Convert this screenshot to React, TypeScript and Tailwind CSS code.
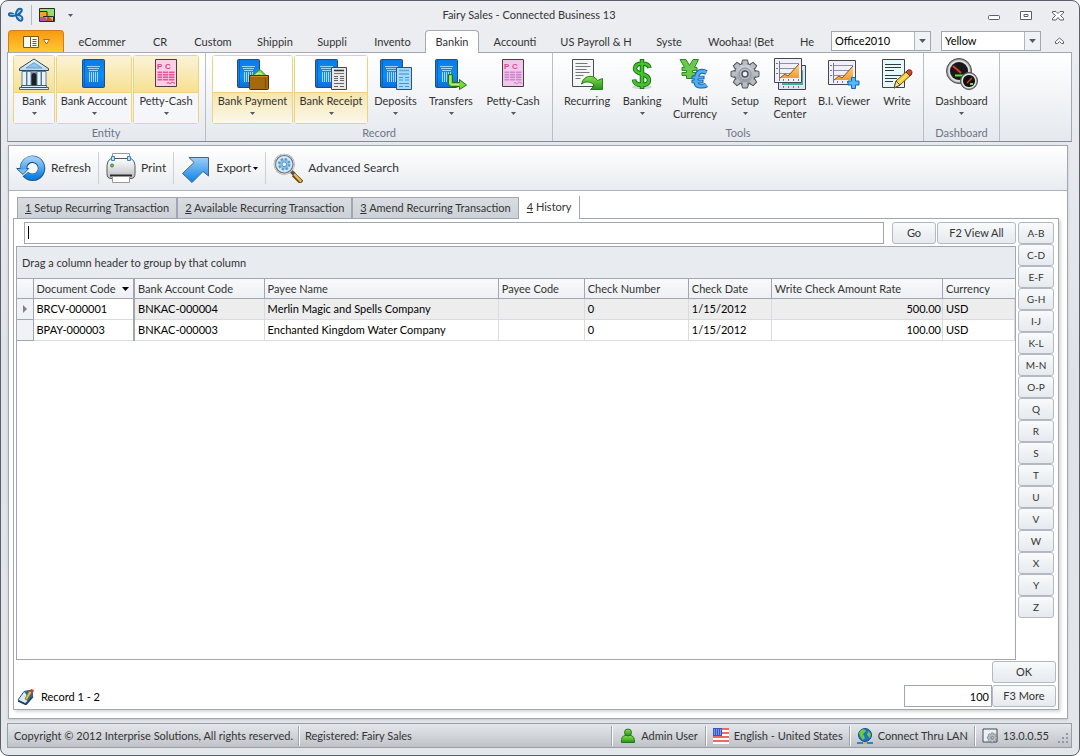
import React, { useState } from 'react';

type RibbonItem = {
  label: string;
  icon: React.ReactNode;
  width: string;
  arrow?: boolean;
  hot?: 'top' | 'bottom';
  wrap?: boolean;
};

type RibbonGroup = {
  title: string;
  pad: string;
  items: RibbonItem[];
};

const LETTERS = ['A-B', 'C-D', 'E-F', 'G-H', 'I-J', 'K-L', 'M-N', 'O-P', 'Q', 'R', 'S', 'T', 'U', 'V', 'W', 'X', 'Y', 'Z'];

const RIBBON_TABS = [
  { label: 'eCommer', width: 'w-[76px]' },
  { label: 'CR', width: 'w-10' },
  { label: 'Custom', width: 'w-[66px]' },
  { label: 'Shippin', width: 'w-[58px]' },
  { label: 'Suppli', width: 'w-14' },
  { label: 'Invento', width: 'w-[65px]' },
  { label: 'Bankin', width: 'w-[54px]' },
  { label: 'Accounti', width: 'w-[72px]' },
  { label: 'US Payroll & H', width: 'w-[90px]' },
  { label: 'Syste', width: 'w-14' },
  { label: 'Woohaa! (Bet', width: 'w-[88px]' },
  { label: 'He', width: 'w-11' }
];

const PAGE_TABS = ['Setup Recurring Transaction', 'Available Recurring Transaction', 'Amend Recurring Transaction', 'History'];

const COLUMNS = [
  { label: 'Bank Account Code', width: 'w-[130px]' },
  { label: 'Payee Name', width: 'w-[234px]' },
  { label: 'Payee Code', width: 'w-[86px]' },
  { label: 'Check Number', width: 'w-[104px]' },
  { label: 'Check Date', width: 'w-[83px]' },
  { label: 'Write Check Amount Rate', width: 'w-[171px]' },
  { label: 'Currency', width: 'w-[72px]' }
];

const ROWS = [
  ['BRCV-000001', 'BNKAC-000004', 'Merlin Magic and Spells Company', '', '0', '1/15/2012', '500.00', 'USD'],
  ['BPAY-000003', 'BNKAC-000003', 'Enchanted Kingdom Water Company', '', '0', '1/15/2012', '100.00', 'USD']
];

const Icon: React.FC<{ children: React.ReactNode; className?: string; box?: string }> = ({
  children,
  className = 'size-8',
  box = '0 0 32 32'
}) => (
  <svg viewBox={box} className={`shrink-0 ${className}`} fill="none" aria-hidden="true">
    {children}
  </svg>
);

const Defs = () => (
  <svg className="absolute size-0" aria-hidden="true">
    <defs>
      <linearGradient id="book" x1="0" y1="0" x2="0" y2="1">
        <stop offset="0" stopColor="#0a7be8" />
        <stop offset="0.6" stopColor="#0b8ef8" />
        <stop offset="1" stopColor="#0a6fd8" />
      </linearGradient>
      <linearGradient id="stone" x1="0" y1="0" x2="0" y2="1">
        <stop offset="0" stopColor="#f2faff" />
        <stop offset="1" stopColor="#b4d8f5" />
      </linearGradient>
      <linearGradient id="blue" x1="0" y1="0" x2="0" y2="1">
        <stop offset="0" stopColor="#9acdf8" />
        <stop offset="1" stopColor="#0b83e6" />
      </linearGradient>
      <linearGradient id="green" x1="0" y1="0" x2="0" y2="1">
        <stop offset="0" stopColor="#8be04e" />
        <stop offset="1" stopColor="#1f9414" />
      </linearGradient>
      <linearGradient id="steel" x1="0" y1="0" x2="0" y2="1">
        <stop offset="0" stopColor="#d6dade" />
        <stop offset="1" stopColor="#8f969e" />
      </linearGradient>
      <linearGradient id="printer" x1="0" y1="0" x2="0" y2="1">
        <stop offset="0" stopColor="#ffffff" />
        <stop offset="1" stopColor="#b9bdc1" />
      </linearGradient>
      <linearGradient id="area" x1="0" y1="0" x2="0" y2="1">
        <stop offset="0" stopColor="#fbd08a" />
        <stop offset="1" stopColor="#f09c30" />
      </linearGradient>
      <radialGradient id="rim">
        <stop offset="0.6" stopColor="#777" />
        <stop offset="0.8" stopColor="#eee" />
        <stop offset="1" stopColor="#666" />
      </radialGradient>
    </defs>
  </svg>
);

const Book = () => (
  <g>
    <path d="M5.500 1.500h20q1 0 1 1v26q0 1-1 1h-20q-1 0-1-1v-26q0-1 1-1z" fill="url(#book)" stroke="#34495e" />
    <path d="M6.500 2v27" stroke="#0a62bd" />
    <path d="M9 8.500h13M10 10.500h11M11 12.500h9" stroke="#9fd2ff" />
    <path d="M11.500 14v10M13.500 14v10M15.500 14v10M17.500 14v10M19.500 14v10" stroke="#a9d7ff" />
  </g>
);

const BankIcon = () => (
  <Icon>
    <path d="M4 12h24v16H4z" fill="#7f9bb2" />
    <path d="M16 1 30.500 10.500v2h-29v-2z" fill="url(#stone)" stroke="#30475c" />
    <path d="M16 4.500 8 10h16z" fill="#8cc5f0" stroke="#5b86aa" strokeWidth=".7" />
    <path d="M4 13.500h4.500v14H4zM9 13.500h4v14H9zM19 13.500h4v14h-4zM23.500 13.500H28v14h-4.500z" fill="#e4f3fe" stroke="#4a6882" strokeWidth=".8" />
    <path d="M13.500 28V17.500q0-2.500 2.500-2.500t2.500 2.500V28z" fill="#1d2024" />
    <path d="M3.500 27.500h25v2h-25zM1.500 29.500h29v2h-29z" fill="#d9effe" stroke="#30475c" strokeWidth=".8" />
  </Icon>
);

const BookIcon = () => (
  <Icon>
    <Book />
  </Icon>
);

const PettyIcon: React.FC<{ ink: string; paper: string; letters: string }> = ({ ink, paper, letters }) => (
  <Icon>
    <path d="M5.500 1.500h21v27h-21z" fill={paper} stroke="#4a3b48" />
    <path d="M7.500 13.500h17v9h-17z" fill={ink} />
    <path d="M7 15.500h18M7 18h18M7 20.500h18M12.500 13v10M18.500 13v10" stroke={paper} strokeWidth=".8" />
    <path d="M17 25.500c2-3 2 2 4-.500s2 .500 4 0" stroke={ink} strokeWidth="1.200" />
    <text x="7" y="11" fontSize="8" fontWeight="bold" fill={letters} fontFamily="Liberation Sans, sans-serif">P</text>
    <text x="15" y="11" fontSize="8" fontWeight="bold" fill={letters} fontFamily="Liberation Sans, sans-serif">C</text>
  </Icon>
);

const PaymentIcon = () => (
  <Icon>
    <g transform="translate(-4)"><Book /></g>
    <path d="M14.500 18 19 14.500l4-3 6.500 6.500z" fill="#7fd84d" stroke="#3a8a26" />
    <path d="M19 16.500q3-3 6 0" stroke="#dff7c9" />
    <path d="M12.500 17.500h19v13q0 1-1 1h-17q-1 0-1-1z" fill="#a4690c" stroke="#4f320a" />
    <path d="M13.500 18.500h17" stroke="#c98c29" />
    <path d="M28.500 20v10" stroke="#7b4c06" />
  </Icon>
);

const ReceiptIcon = () => (
  <Icon>
    <g transform="translate(-4)"><Book /></g>
    <path d="M16.500 9.500h15v22h-15z" fill="#e8e8e8" stroke="#484848" />
    <path d="M19 12.500h10" stroke="#333" strokeWidth="1.500" />
    <path d="M19 15.500h10" stroke="#777" />
    <path d="M19 18.500h4M25 18.500h4M19 20.500h4M25 20.500h4M19 22.500h4M25 22.500h4M19 25.500h10M19 28.500h4M25 28.500h4" stroke="#666" />
  </Icon>
);

const DepositsIcon = () => (
  <Icon>
    <g transform="translate(-4)"><Book /></g>
    <path d="M16.500 9.500h15v22h-15z" fill="#a6dafa" stroke="#34516a" />
    <path d="M19 12.500h10M19 16h10" stroke="#5aa9dc" strokeWidth="1.500" />
    <path d="M19 19.500h4M25 19.500h4M19 22h4M25 22h4M19 25.500h10M19 28.500h4M25 28.500h4" stroke="#4597cb" />
  </Icon>
);

const TransfersIcon = () => (
  <Icon>
    <g transform="translate(-4)"><Book /></g>
    <path d="M13.500 16.500h4v8h7v-3l7 5.500-7 4.500v-3h-8q-3 0-3-3z" fill="#7ed832" stroke="#2d6e1d" />
    <path d="M15 18v7q0 1.500 2 1.500h7" stroke="#c3f58d" />
  </Icon>
);

const RecurringIcon = () => (
  <Icon>
    <path d="M1.500 1.500h21v27h-21z" fill="#f5f6f7" stroke="#4a4d50" />
    <path d="M4.500 5.500h12M4.500 8.500h15M4.500 11.500h11M4.500 14.500h14M4.500 17.500h8M4.500 20.500h5" stroke="#777" />
    <path d="M10.500 26c2-9 12-10 16-3.500l5-2v11h-12l4-4c-4-4.500-9-4.500-13-1.500z" fill="url(#green)" stroke="#2c7a22" />
  </Icon>
);

const DollarIcon = () => (
  <Icon>
    <ellipse cx="16" cy="29" rx="10" ry="2" fill="#cfd3d6" />
    <path d="M23.500 10Q22.500 5.500 16 5.500T9 10.500q0 3.500 7 5.500t7 6q0 5-7 5-7.500 0-8-5.500M16 1v30" stroke="#176b12" strokeWidth="4.500" />
    <path d="M23.500 9.500Q22.500 5.500 16 5.500T9 10.500q0 3.500 7 5.500t7 6q0 5-7 5-7.500 0-8-5M16 1.800v28.400" stroke="#42c22c" strokeWidth="2.700" />
  </Icon>
);

const CurrencyIcon = () => (
  <Icon>
    <path d="M1 1.500h6l3.500 6 3.500-6h5.500l-4 8h2.500v3h-4.500v2H18v3h-4.500v3h-6v-3H3v-3h4.500v-2H3v-3h2.500z" fill="#6cc84a" stroke="#2a8a2b" />
    <path d="M27.500 14.500q-8-4-10 4.500t3 9 7-1" stroke="#155f9f" strokeWidth="5" />
    <path d="M12.500 19.500h13M12.500 23.500h12" stroke="#155f9f" strokeWidth="3.500" />
    <path d="M27.500 14.500q-8-4-10 4.500t3 9 7-1" stroke="#52aef2" strokeWidth="3" />
    <path d="M13.500 19.500h11M13.500 23.500h10" stroke="#52aef2" strokeWidth="1.800" />
  </Icon>
);

const gearTeeth = [0, 45, 90, 135, 180, 225, 270, 315];

const Gear: React.FC<{ fill: string; stroke: string }> = ({ fill, stroke }) => (
  <g>
    {gearTeeth.map((deg) => (
      <path key={deg} d="m12.500 6 1-4h5l1 4z" fill="#b3b9bf" stroke={stroke} transform={`rotate(${deg} 16 16)`} />
    ))}
    <circle cx="16" cy="16" r="10.500" fill={fill} stroke={stroke} />
    {gearTeeth.map((deg) => (
      <path key={deg} d="m13.500 7.500.5-4h4l.5 4z" fill="#b9bec4" transform={`rotate(${deg} 16 16)`} />
    ))}
    <circle cx="16" cy="16" r="6" fill="#b7bcc2" stroke="#8a9097" />
    <circle cx="16" cy="16" r="3" fill="#eef0f2" stroke={stroke} strokeWidth="1.500" />
  </g>
);

const SetupIcon = () => (
  <Icon>
    <Gear fill="url(#steel)" stroke="#50565d" />
  </Icon>
);

const Chart = () => (
  <g>
    <path d="M.5.500h27v24H.5z" fill="#f1effa" stroke="#46464e" />
    <path d="M5 5.500h20M5 10.500h20M5 15.500h20" stroke="#8e8ea6" />
    <path d="M2 5.500h2M2 10.500h2M2 15.500h2M5.500 3v20M9.500 21v2M14.500 21v2M19.500 21v2M24.500 21v2" stroke="#75758c" />
    <path d="m6 20 5-4 3 2 11-12v14z" fill="url(#area)" />
    <path d="m6 20 5-4 3 2 11-12" stroke="#875315" />
  </g>
);

const ReportIcon = () => (
  <Icon>
    <path d="M4.500 7.500h27v24h-27z" fill="#e3e1f2" stroke="#46464e" />
    <path d="M8 20 29 12v15H8z" fill="#38b596" />
    <path d="M9.500 28v2M14.500 28v2M19.500 28v2M24.500 28v2" stroke="#75758c" />
    <Chart />
  </Icon>
);

const ViewerIcon = () => (
  <Icon>
    <g transform="translate(0 2)"><Chart /></g>
    <path d="M23.500 19.500h4v3.500h3.500v4h-3.500v3.500h-4V27H20v-4h3.500z" fill="#52b9fa" stroke="#1668b0" />
  </Icon>
);

const WriteIcon = () => (
  <Icon>
    <path d="M1.500 1.500h22v28h-22z" fill="#e5f9fb" stroke="#3f464b" />
    <path d="M4 6.500h16M4 9.500h16M4 12.500h9M4 17.500h16M4 20.500h12M4 23.500h8" stroke="#33383c" />
    <path d="m13 30 2-7 12-11 4 4-12 11z" fill="#f6cf3a" stroke="#664c14" />
    <path d="m17 25 11-10" stroke="#fff3a6" />
    <path d="m25 14 2-2q4-1 4 3l-2 3z" fill="#d44a2e" stroke="#73261a" />
    <path d="m13 30 2-7 4 4z" fill="#f5deb5" stroke="#664c14" />
  </Icon>
);

const DashboardIcon = () => (
  <Icon>
    <circle cx="13" cy="13" r="12.500" fill="url(#rim)" stroke="#555" />
    <circle cx="13" cy="13" r="9" fill="#16181a" />
    <path d="m7 8 8 7" stroke="#e23a22" strokeWidth="2" />
    <path d="M9 17.500h8" stroke="#52e23b" strokeWidth="2" />
    <circle cx="23" cy="23" r="8.500" fill="url(#rim)" stroke="#555" />
    <circle cx="23" cy="23" r="6" fill="#111" />
    <path d="m21 25 5-5" stroke="#e23a22" strokeWidth="1.500" />
    <path d="M24 26h3" stroke="#62e23b" strokeWidth="2" />
  </Icon>
);

const RefreshIcon = () => (
  <Icon className="size-[30px]" box="0 0 30 30">
    <path d="M7.500 15.500A9 9 0 1 1 9.500 21" stroke="#29557c" strokeWidth="7.500" />
    <path d="M.7 15.500h12L7 21.500z" fill="#7fc0f5" stroke="#29557c" />
    <path d="M7.500 16.500A9 9 0 1 1 10 21.300" stroke="url(#blue)" strokeWidth="5.800" />
  </Icon>
);

const PrintIcon = () => (
  <Icon className="size-[30px]" box="0 0 30 30">
    <path d="M6.500.5h17v9h-17z" fill="#fff" stroke="#9a9a9a" />
    <path d="M5 5.500q-4 2-4 7v8q0 5 4 5h20q4 0 4-5v-8q0-5-4-7z" fill="url(#printer)" stroke="#55585b" />
    <path d="M5.500 3.500h3v4h-3zM21.500 3.500h3v4h-3z" fill="#bfe2fb" stroke="#2c88c9" />
    <circle cx="6" cy="12.500" r="1.500" fill="#79c35a" stroke="#467c35" />
    <path d="M4 21.500h22v2H4z" fill="#2a2c2e" />
    <path d="M6.500 23.500h17v6h-17z" fill="#fff" stroke="#999" />
  </Icon>
);

const ExportIcon = () => (
  <Icon className="size-[30px]" box="0 0 30 30">
    <path d="M8 4.500h19.500V23L22 18.500 11 29.500 1.500 20.500l11.500-11z" fill="url(#blue)" stroke="#4c6276" />
  </Icon>
);

const SearchIcon = () => (
  <Icon className="size-[30px]">
    <path d="m19 19 4 4" stroke="#555" strokeWidth="4" />
    <path d="m22 23 8.500 8.500" stroke="#5a4520" strokeWidth="5" />
    <path d="m22.500 22.500 7.500 8" stroke="#efb94e" strokeWidth="2.500" />
    <circle cx="12" cy="12" r="10" fill="#d4e9f8" stroke="#73797e" strokeWidth="2.500" />
    <circle cx="12" cy="12" r="10.500" stroke="#e4e8eb" />
    <circle cx="12" cy="12" r="5.500" fill="#8fc3ea" stroke="#5e9ccd" strokeWidth="2.500" strokeDasharray="2.500 1.800" />
    <circle cx="12" cy="12" r="2.500" fill="#eff8fe" stroke="#4788bb" />
  </Icon>
);

const GROUPS: RibbonGroup[] = [
  {
    title: 'Entity',
    pad: 'pl-[5px] pr-1.5',
    items: [
      { label: 'Bank', icon: <BankIcon />, width: 'w-[42px]', arrow: true, hot: 'top' },
      { label: 'Bank Account', icon: <BookIcon />, width: 'w-[76px]', arrow: true, hot: 'top' },
      { label: 'Petty-Cash', icon: <PettyIcon ink="#e8559b" paper="#fbd0e4" letters="#e0408a" />, width: 'w-[66px]', arrow: true, hot: 'top' }
    ]
  },
  {
    title: 'Record',
    pad: 'px-1.5',
    items: [
      { label: 'Bank Payment', icon: <PaymentIcon />, width: 'w-[81px]', arrow: true, hot: 'bottom' },
      { label: 'Bank Receipt', icon: <ReceiptIcon />, width: 'w-[74px]', arrow: true, hot: 'bottom' },
      { label: 'Deposits', icon: <DepositsIcon />, width: 'w-[53px]', arrow: true },
      { label: 'Transfers', icon: <TransfersIcon />, width: 'w-14', arrow: true },
      { label: 'Petty-Cash', icon: <PettyIcon ink="#cf86cf" paper="#f0c9ea" letters="#e04a90" />, width: 'w-[66px]', arrow: true }
    ]
  },
  {
    title: 'Tools',
    pad: 'px-1.5',
    items: [
      { label: 'Recurring', icon: <RecurringIcon />, width: 'w-14' },
      { label: 'Banking', icon: <DollarIcon />, width: 'w-[52px]', arrow: true },
      { label: 'Multi Currency', icon: <CurrencyIcon />, width: 'w-[52px]', wrap: true },
      { label: 'Setup', icon: <SetupIcon />, width: 'w-[46px]', arrow: true },
      { label: 'Report Center', icon: <ReportIcon />, width: 'w-[42px]', wrap: true },
      { label: 'B.I. Viewer', icon: <ViewerIcon />, width: 'w-16' },
      { label: 'Write', icon: <WriteIcon />, width: 'w-10' }
    ]
  },
  {
    title: 'Dashboard',
    pad: 'px-1.5',
    items: [{ label: 'Dashboard', icon: <DashboardIcon />, width: 'w-[63px]', arrow: true }]
  }
];

const Caret: React.FC<{ className?: string }> = ({ className = 'h-[3px] w-[5px] text-[#555a62]' }) => (
  <svg viewBox="0 0 5 3" className={`shrink-0 ${className}`} aria-hidden="true">
    <path d="M0 0h5L2.500 3z" fill="currentColor" />
  </svg>
);

const TitleBar = () => (
  <header className="flex h-[28px] items-center pl-px">
    <div className="flex w-[70px] items-center">
      <Icon className="size-4" box="0 0 16 16">
        <path d="M6 7.500C1 5 .5 7 1 8s4 1.500 7 0C8 3 11 1 13 2s0 4-4 6c5 0 6 3 5 5s-5 0-6-5" stroke="#1c64a8" strokeWidth="2" />
        <path d="M2 7.500h5M12 3 9 7M13 12 9 9" stroke="#79c3f5" />
      </Icon>
      <span className="mx-[7px] h-5 w-px bg-[#b4b8bf]" />
      <Icon className="size-4" box="0 0 16 16">
        <path d="M.5 1.500h15v13H.5z" fill="#8fe070" stroke="#2b2b2b" />
        <path d="M1 5h7l5 5v4H1z" fill="#f7a51f" />
        <path d="M1 10h5l3 4H1z" fill="#c24fa0" />
        <path d="M1 4.500h7v5h6.500V14M4 9.500h5V14" stroke="#2b2b2b" />
        <path d="m10 10 4 4h-4z" fill="#e6442c" />
      </Icon>
      <Caret className="ml-[13px] h-[3px] w-[5px] text-[#555a62]" />
    </div>
    <h1 className="flex-1 text-center">Fairy Sales - Connected Business 13</h1>
    <div className="flex w-[92px] items-center gap-5 pl-2">
      <button type="button" aria-label="Minimize" className="h-[13px] w-3">
        <Icon className="h-[13px] w-3" box="0 0 12 13">
          <path d="M1.500 6.500h9q1 0 1 1v2q0 1-1 1h-9q-1 0-1-1v-2q0-1 1-1z" fill="#fff" stroke="#5b6068" />
        </Icon>
      </button>
      <button type="button" aria-label="Restore" className="h-[13px] w-3">
        <Icon className="h-[13px] w-3" box="0 0 12 13">
          <path d="M.5 2.500h11v8H.5z" fill="#fff" stroke="#5b6068" />
          <path d="M4 5.500h4v2H4z" stroke="#5b6068" />
        </Icon>
      </button>
      <button type="button" aria-label="Close" className="h-[13px] w-3">
        <Icon className="h-[13px] w-3" box="0 0 12 13">
          <path d="M.5 2.500H4l2 2 2-2h3.500v1.500L8.500 6.500l3 3V11H8L6 8.500 4 11H.5V9.500l3-3-3-2.500z" fill="#fff" stroke="#5b6068" />
        </Icon>
      </button>
    </div>
  </header>
);

const SkinSelect: React.FC<{ label: string; options: string[] }> = ({ label, options }) => (
  <div className="relative h-5 w-[100px] shrink-0">
    <select aria-label={label} className="size-full appearance-none border border-[#a0a7b2] bg-white pr-4 pl-[3px] text-black">
      {options.map((o) => (
        <option key={o}>{o}</option>
      ))}
    </select>
    <span className="pointer-events-none absolute inset-y-px right-px flex w-4 items-center justify-center border-l border-[#b0b6c0] bg-[#f0f3f6]">
      <Caret className="h-1 w-[7px] text-[#555a62]" />
    </span>
  </div>
);

const RibbonTabs = () => {
  const [active, setActive] = useState('Bankin');

  return (
    <nav className="flex h-[23px] items-end px-px">
      <button
        type="button"
        aria-label="Application menu"
        className="flex h-[22px] w-14 items-center justify-center gap-0.5 rounded-t-sm border border-b-0 border-[#d77a1a] bg-linear-to-b from-[#f79a0c] to-[#ffc933]"
      >
        <Icon className="h-3 w-4" box="0 0 16 12">
          <path d="M.5.500h7v11h-7zM7.500.500h8v11h-8z" fill="#fffdf0" stroke="#7a5a1c" />
          <path d="M9.500 3.500h4M9.500 5.500h4M9.500 7.500h4M9.500 9.500h4" stroke="#7a5a1c" />
        </Icon>
        <Icon className="ml-0.5 h-[6px] w-[7px]" box="0 0 7 6">
          <path d="M.5.500h6L3.500 5z" fill="#fff" stroke="#a86b10" />
        </Icon>
      </button>
      {RIBBON_TABS.map((tab) => (
        <button
          key={tab.label}
          type="button"
          onClick={() => setActive(tab.label)}
          className={`h-[23px] shrink-0 rounded-t-sm whitespace-nowrap ${tab.width} ${
            tab.label === active ? 'relative -mb-px border border-b-0 border-[#a3a9b3] bg-white' : 'pt-0.5'
          }`}
        >
          {tab.label}
        </button>
      ))}
      <div className="ml-auto flex items-center gap-[10px] pb-px">
        <SkinSelect label="Skin" options={['Office2010', 'Office2007']} />
        <SkinSelect label="Colour" options={['Yellow', 'Blue', 'Silver']} />
        <button type="button" aria-label="Collapse ribbon" className="ml-0.5 w-[18px] pl-0.5">
          <Icon className="h-2 w-[9px]" box="0 0 9 8">
            <path d="M.5 4.500 4.500 1l4 3.500v2h-2l-2-2-2 2h-2z" fill="#fff" stroke="#5b6068" />
          </Icon>
        </button>
      </div>
    </nav>
  );
};

const RibbonButton: React.FC<{ item: RibbonItem }> = ({ item }) => {
  const frame = item.hot ? 'border-[#eed37c]' : 'border-transparent';
  const top = item.hot === 'top' ? 'bg-linear-to-b from-[#faf3d8] to-[#f7e08e]' : item.hot ? 'bg-white' : '';
  const bottom = item.hot === 'bottom' ? 'bg-linear-to-b from-[#f6e6ad] to-[#fbf8ec]' : item.hot ? 'bg-[#f4f6f9]' : '';

  return (
    <button type="button" className={`flex h-[69px] shrink-0 flex-col rounded-[3px] border ${frame} ${item.width}`}>
      <span className={`flex h-[37px] w-full items-center justify-center border-b ${frame} ${top}`}>{item.icon}</span>
      <span className={`flex w-full flex-1 flex-col items-center gap-[5px] pt-px leading-[13px] ${bottom}`}>
        <span className={item.wrap ? '' : 'whitespace-nowrap'}>{item.label}</span>
        {item.arrow && <Caret />}
      </span>
    </button>
  );
};

const Ribbon = () => (
  <div className="flex h-[90px] border border-[#a3a9b3] border-b-[#838b96] bg-linear-to-b from-white to-[#e5e9ee]">
    {GROUPS.map((group) => (
      <section key={group.title} className={`flex flex-col border-r border-[#b9bec7] pt-0.5 ${group.pad}`}>
        <div className="flex gap-px">
          {group.items.map((item) => (
            <RibbonButton key={item.label} item={item} />
          ))}
        </div>
        <h2 className="mt-[3px] text-center leading-3 text-[#6c7686]">{group.title}</h2>
      </section>
    ))}
  </div>
);

const ToolDivider = () => <span className="mx-[7px] h-8 w-px bg-[#ccd0d6]" />;

const Toolbar = () => (
  <div className="flex h-[45px] items-center border-b border-[#aeb4be] bg-linear-to-b from-white to-[#e9ecf0] pl-[7px] text-xs whitespace-nowrap">
    <button type="button" className="flex items-center gap-[5px]">
      <RefreshIcon />
      Refresh
    </button>
    <ToolDivider />
    <button type="button" className="flex items-center gap-[5px]">
      <PrintIcon />
      Print
    </button>
    <ToolDivider />
    <button type="button" className="flex items-center gap-[5px]">
      <ExportIcon />
      Export
      <Caret className="-ml-[3px] h-[3px] w-[5px] text-black" />
    </button>
    <ToolDivider />
    <button type="button" className="flex items-center gap-[5px]">
      <SearchIcon />
      Advanced Search
    </button>
  </div>
);

const PageTabs: React.FC<{ active: number; onSelect: (i: number) => void }> = ({ active, onSelect }) => (
  <div role="tablist" className="flex h-[23px] items-end pl-1">
    {PAGE_TABS.map((label, i) => (
      <button
        key={label}
        type="button"
        role="tab"
        aria-selected={i === active}
        onClick={() => onSelect(i)}
        className={
          i === active
            ? 'relative -mb-px h-[23px] border-r border-[#a0a7b2] bg-white px-2 pb-px'
            : 'h-[21px] border border-b-0 border-[#a0a7b2] bg-linear-to-b from-[#d9dde2] to-[#cdd2d8] px-[7px]'
        }
      >
        <u>{i + 1}</u> {label}
      </button>
    ))}
  </div>
);

const PushButton: React.FC<{ children: React.ReactNode; className: string }> = ({ children, className }) => (
  <button
    type="button"
    className={`h-[22px] shrink-0 rounded-[3px] border border-[#b3b9c2] bg-linear-to-b from-[#f8fafb] to-[#e6eaee] ${className}`}
  >
    {children}
  </button>
);

const Grid = () => (
  <div className="flex-1 border border-[#a0a7b2] bg-white">
    <p className="flex h-[31px] items-center bg-[#e8ebf0] pl-[5px]">Drag a column header to group by that column</p>
    <table className="w-full table-fixed border-collapse">
      <thead>
        <tr className="h-5 bg-linear-to-b from-[#f7f9fb] to-[#edf0f4] text-left">
          <th className="w-4 border border-l-0 border-[#a0a7b2]" />
          <th className="w-[101px] border border-r-2 border-[#a0a7b2] pl-[3px] font-normal whitespace-nowrap">
            <span className="flex items-center justify-between pr-1">
              Document Code
              <svg viewBox="0 0 7 4" className="h-1 w-[7px]" aria-hidden="true">
                <path d="M0 0h7L3.500 4z" fill="#000" />
              </svg>
            </span>
          </th>
          {COLUMNS.map((col) => (
            <th key={col.label} className={`border border-[#a0a7b2] pl-[3px] font-normal whitespace-nowrap last:border-r-0 ${col.width}`}>
              {col.label}
            </th>
          ))}
        </tr>
      </thead>
      <tbody className="text-black">
        {ROWS.map((row, r) => (
          <tr key={row[0]} className={`h-[21px] ${r === 0 ? 'bg-[#ededee]' : 'bg-white'}`}>
            <td className="border-r border-b border-[#a0a7b2] bg-[#f0f2f5]">
              {r === 0 && (
                <svg viewBox="0 0 4 8" className="mx-auto h-2 w-1" aria-hidden="true">
                  <path d="M0 0v8l4-4z" fill="#7c828c" />
                </svg>
              )}
            </td>
            {row.map((cell, c) => (
              <td
                key={c}
                className={`border-b border-b-[#d9dbde] whitespace-nowrap ${
                  c === 0 ? 'border-r-2 border-r-[#a0a7b2] bg-white' : 'border-r border-r-[#d9dbde]'
                } ${c === 6 ? 'pr-px text-right' : 'pl-[3px]'}`}
              >
                {cell}
              </td>
            ))}
          </tr>
        ))}
      </tbody>
    </table>
  </div>
);

const HistoryPanel = () => {
  const [query, setQuery] = useState('');
  const [count, setCount] = useState('100');

  return (
    <div className="flex flex-1 flex-col border border-[#a0a7b2] bg-white px-0.5 pt-[3px] shadow-[2px_2px_3px_#d5d7da]">
      <div className="flex flex-1 gap-0.5 pr-0.5">
        <div className="flex flex-1 flex-col gap-0.5">
          <div className="flex gap-px pl-2">
            <div className="relative mr-[7px] flex-1">
              <input
                aria-label="Search history"
                value={query}
                onChange={(e) => setQuery(e.target.value)}
                className="h-[22px] w-full border border-[#a0a7b2] bg-white px-1 outline-none"
              />
              {!query && <span className="absolute top-1 left-1 h-[13px] w-px bg-black" />}
            </div>
            <PushButton className="w-11">Go</PushButton>
            <PushButton className="w-[79px]">F2 View All</PushButton>
          </div>
          <Grid />
        </div>
        <div className="flex w-9 flex-col">
          {LETTERS.map((l) => (
            <PushButton key={l} className="w-full text-[10px]">
              {l}
            </PushButton>
          ))}
        </div>
      </div>
      <div className="flex h-[49px] items-end justify-between pb-0.5">
        <div className="flex items-center gap-[7px] pb-0.5 pl-0.5 text-black">
          <Icon className="size-4" box="0 0 16 16">
            <path d="M0 11 6 2.500l8-1.500-3 11-4 2.500z" fill="#dceaf6" stroke="#315878" />
            <path d="m6 2.500 9-1.500v6l-7 8 2-7z" fill="#1f6bb0" />
            <path d="m7 10 4-8 3 1-5 8z" fill="#f0bf35" stroke="#7d5d16" strokeWidth=".7" />
            <path d="m12 2 1-2 3 1-1 3z" fill="#d2402b" />
            <path d="m0 12 8 3.500 7-8" stroke="#1e3a58" strokeWidth="1.500" />
          </Icon>
          <span>Record 1 - 2</span>
        </div>
        <div className="flex flex-col items-end gap-0.5">
          <PushButton className="w-16">OK</PushButton>
          <div className="flex">
            <input
              aria-label="Record limit"
              value={count}
              onChange={(e) => setCount(e.target.value)}
              className="h-[22px] w-[88px] border border-[#a0a7b2] bg-white px-0.5 text-right text-black outline-none"
            />
            <PushButton className="w-16">F3 More</PushButton>
          </div>
        </div>
      </div>
    </div>
  );
};

const StatusDivider = () => <span className="h-5 w-0.5 border-r border-white bg-[#9fa4ac]" />;

const StatusBar = () => (
  <footer className="flex h-[25px] items-center border border-[#989ea8] bg-linear-to-b from-[#e4e7eb] to-[#bfc3c9] pl-1.5 whitespace-nowrap">
    <span className="mr-[5px]">Copyright © 2012 Interprise Solutions, All rights reserved.</span>
    <StatusDivider />
    <span className="ml-[5px]">Registered: Fairy Sales</span>
    <div className="ml-auto flex items-center">
      <StatusDivider />
      <span className="flex items-center gap-[5px] px-[7px]">
        <Icon className="size-4" box="0 0 16 16">
          <path d="M1.500 14.500q-.5-7 4-7h5q4 0 4 7z" fill="url(#green)" stroke="#257224" />
          <circle cx="8" cy="4.500" r="3.500" fill="url(#green)" stroke="#257224" />
        </Icon>
        Admin User
      </span>
      <StatusDivider />
      <span className="flex items-center gap-[5px] px-[6px]">
        <Icon className="size-4" box="0 0 16 16">
          <path d="M0 0h16v16H0z" fill="#fff" />
          <path d="M0 1h16M0 5h16M0 9h16M0 13h16" stroke="#ec6a62" strokeWidth="2" />
          <path d="M0 0h9v8H0z" fill="#3158c4" />
          <path d="M1 2h7M1 4h7M1 6h7" stroke="#c8d6fa" strokeDasharray="1 1" />
        </Icon>
        English - United States
      </span>
      <StatusDivider />
      <span className="flex items-center gap-[5px] px-[6px]">
        <Icon className="size-4" box="0 0 16 16">
          <circle cx="8" cy="7" r="6.500" fill="#1e70c9" stroke="#174a88" />
          <path d="M4 2q4-2 5 1L6 6l2 4-2 2-3-4-1-3zM11 3l3 3-1 4-3-3z" fill="#6ecb3d" />
          <path d="M0 15h16" stroke="#2887c9" strokeWidth="2" />
          <path d="M6 15h4" stroke="#e9b43e" strokeWidth="2" />
        </Icon>
        Connect Thru LAN
      </span>
      <StatusDivider />
      <span className="flex items-center gap-[5px] px-[6px]">
        <Icon className="size-4" box="0 0 16 16">
          <path d="M1 1h14v13H1z" fill="#e9f1f7" stroke="#444a50" />
          <g transform="translate(4.500 4) scale(.36)">
            <Gear fill="#c5c9cd" stroke="#3e4449" />
          </g>
        </Icon>
        13.0.0.55
      </span>
      <Icon className="size-4 self-end" box="0 0 16 16">
        <path d="M11 3h2v2h-2zM7 7h2v2H7zM11 7h2v2h-2zM3 11h2v2H3zM7 11h2v2H7zM11 11h2v2h-2z" fill="#9298a1" />
      </Icon>
    </div>
  </footer>
);

export default function App() {
  const [tab, setTab] = useState(3);

  return (
    <div className="flex min-h-screen flex-col rounded-lg border border-[#59606b] bg-linear-to-b from-[#eceef2] via-[#dfe2e6] to-[#e4e7ea] pr-[7px] pb-[7px] pl-1.5 font-['Lato',sans-serif] text-[11px] leading-4 text-[#333]">
      <Defs />
      <TitleBar />
      <RibbonTabs />
      <Ribbon />
      <main className="mt-[3px] mr-1 mb-1 ml-px flex flex-1 flex-col border border-[#a0a7b2] bg-white shadow-sm">
        <Toolbar />
        <div className="flex flex-1 flex-col pt-1 pr-2 pb-2 pl-1">
          <PageTabs active={tab} onSelect={setTab} />
          <HistoryPanel />
        </div>
      </main>
      <StatusBar />
    </div>
  );
}
